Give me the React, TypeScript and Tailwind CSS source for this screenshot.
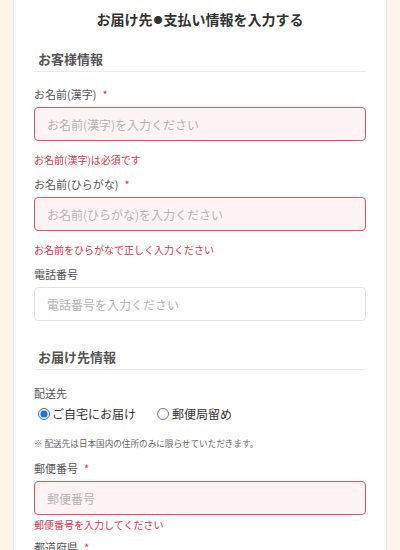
import { useState } from 'react';

interface FieldProps {
  label: string;
  placeholder: string;
  required?: boolean;
  error?: string;
  className?: string;
}

function Field({ label, placeholder, required, error, className = '' }: FieldProps) {
  return (
    <div className={`flex flex-col ${className}`}>
      <label className="text-[11px] leading-4 text-[#555]">
        {label}
        {required && <span className="ml-[6px] text-[#e0303f]">*</span>}
      </label>
      <input
        placeholder={placeholder}
        className={`mt-[5px] h-[34px] w-full rounded-[4px] border px-[12px] text-[12px] outline-none placeholder:text-[#b5b5b5] ${
          error ? 'border-[#e05563] bg-[#fff4f3]' : 'border-[#e3e3e3] bg-white'
        }`}
      />
    </div>
  );
}

export default function App() {
  const [dest, setDest] = useState('home');

  return (
    <div
      className="h-[550px] w-[400px] overflow-hidden bg-[#fdf5ec] px-[13px]"
      style={{ fontFamily: '"Noto Sans CJK JP", "Noto Sans", sans-serif' }}
    >
      <div className="flex min-h-[550px] flex-col border-x border-[#ece9e6] bg-white px-[20px] pt-[9px] pb-6">
        <h1 className="flex h-5 items-center justify-center text-[14px] font-bold leading-5 text-[#333]">
          お届け先<span className="mx-[1px] text-[9px] leading-none">●</span>支払い情報を入力する
        </h1>

        {/* お客様情報 */}
        <h2 className="mt-[20px] border-b border-[#eaeaea] pb-[2px] pl-[4px] text-[13px] font-bold leading-5 text-[#555]">
          お客様情報
        </h2>
        <Field className="mt-[14px]" label="お名前(漢字)" placeholder="お名前(漢字)を入力ください" required error="x" />
        <p className="mt-[12px] text-[10px] leading-[14px] text-[#d9364a]">お名前(漢字)は必須です</p>
        <Field className="mt-[9px]" label="お名前(ひらがな)" placeholder="お名前(ひらがな)を入力ください" required error="x" />
        <p className="mt-[12px] text-[10px] leading-[14px] text-[#d9364a]">お名前をひらがなで正しく入力ください</p>
        <Field className="mt-[9px]" label="電話番号" placeholder="電話番号を入力ください" />

        {/* お届け先情報 */}
        <h2 className="mt-[26px] border-b border-[#eaeaea] pb-[2px] pl-[4px] text-[13px] font-bold leading-5 text-[#555]">
          お届け先情報
        </h2>
        <p className="mt-[15px] text-[11px] leading-4 text-[#555]">配送先</p>
        <div className="mt-[4px] flex items-center pl-[4px] text-[12px] leading-[18px] text-[#333]">
          <label className="flex items-center">
            <input
              type="radio"
              name="dest"
              checked={dest === 'home'}
              onChange={() => setDest('home')}
              className="m-0 h-[12px] w-[12px] accent-[#1a73e8]"
            />
            <span className="ml-[2px]">ご自宅にお届け</span>
          </label>
          <label className="ml-[21px] flex items-center">
            <input
              type="radio"
              name="dest"
              checked={dest === 'post'}
              onChange={() => setDest('post')}
              className="m-0 h-[12px] w-[12px] accent-[#1a73e8]"
            />
            <span className="ml-[3px]">郵便局留め</span>
          </label>
        </div>
        <p className="mt-[14px] text-[8.6px] leading-3 text-[#666]">
          ※ 配送先は日本国内の住所のみに限らせていただきます。
        </p>
        <Field className="mt-[11px]" label="郵便番号" placeholder="郵便番号" required error="x" />
        <p className="mt-[3px] text-[10px] leading-[14px] text-[#d9364a]">郵便番号を入力してください</p>
        <Field className="mt-[7px]" label="都道府県" placeholder="都道府県を選択してください" required />
      </div>
    </div>
  );
}
